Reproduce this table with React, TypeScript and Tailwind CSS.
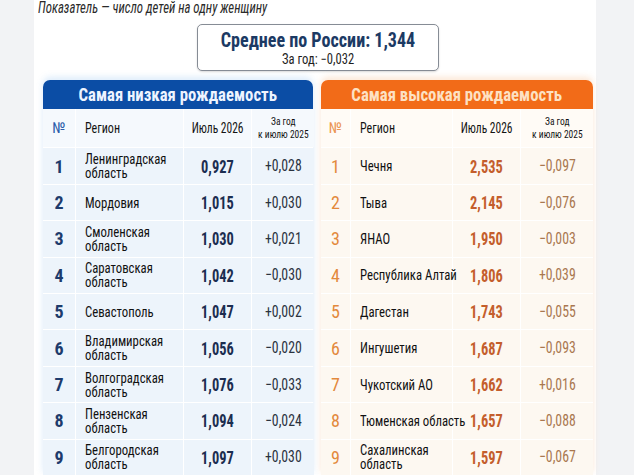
import React from 'react'

type Row = [number, string, string, string]

const lowest: Row[] = [
  [1, 'Ленинградская\nобласть', '0,927', '+0,028'],
  [2, 'Мордовия', '1,015', '+0,030'],
  [3, 'Смоленская\nобласть', '1,030', '+0,021'],
  [4, 'Саратовская\nобласть', '1,042', '−0,030'],
  [5, 'Севастополь', '1,047', '+0,002'],
  [6, 'Владимирская\nобласть', '1,056', '−0,020'],
  [7, 'Волгоградская\nобласть', '1,076', '−0,033'],
  [8, 'Пензенская\nобласть', '1,094', '−0,024'],
  [9, 'Белгородская\nобласть', '1,097', '+0,030'],
]

const highest: Row[] = [
  [1, 'Чечня', '2,535', '−0,097'],
  [2, 'Тыва', '2,145', '−0,076'],
  [3, 'ЯНАО', '1,950', '−0,003'],
  [4, 'Республика Алтай', '1,806', '+0,039'],
  [5, 'Дагестан', '1,743', '−0,055'],
  [6, 'Ингушетия', '1,687', '−0,093'],
  [7, 'Чукотский АО', '1,662', '+0,016'],
  [8, 'Тюменская область', '1,657', '−0,088'],
  [9, 'Сахалинская\nобласть', '1,597', '−0,067'],
]

// the source font is narrower than anything installed, so glyphs get squeezed per element
const squeeze = 'inline-block whitespace-pre'

function HeadRow({ cols, bg, numColor }: { cols: string; bg: string; numColor: string }) {
  return (
    <div className={`${cols} h-[38px]`}>
      <div className={`${bg} flex items-center justify-center text-[15px] ${numColor}`}>№</div>
      <div className={`${bg} flex items-center pl-[9px] text-[14px] text-[#141414]`}>
        <span className={`${squeeze} scale-x-[0.86] origin-left`}>Регион</span>
      </div>
      <div className={`${bg} flex items-center justify-center text-[14px] text-[#141414]`}>
        <span className={`${squeeze} scale-x-[0.82]`}>Июль 2026</span>
      </div>
      <div className={`${bg} flex flex-col items-center justify-center text-[11px] leading-[13px] text-[#141414]`}>
        <span className={`${squeeze} scale-x-[0.86]`}>За год</span>
        <span className={`${squeeze} scale-x-[0.86]`}>к июлю 2025</span>
      </div>
    </div>
  )
}

function LowTable() {
  const cols = 'grid grid-cols-[32px_107px_67px_62px] gap-x-[1px]'
  return (
    <div className="w-[270px] shadow-[0_-3px_6px_rgba(120,180,240,0.25)] rounded-t-[7px]">
      <div className="h-[29px] rounded-t-[7px] bg-[#0b4da5] flex items-center justify-center text-[19px] font-bold text-[#eef4ff] leading-none">
        <span className={`${squeeze} scale-x-[0.88]`}>Самая низкая рождаемость</span>
      </div>
      <div className="bg-white flex flex-col gap-y-[1px]">
        <HeadRow cols={cols} bg="bg-[#f5f9fd]" numColor="text-[#2b5daa]" />
        {lowest.map(([n, region, value, delta]) => (
          <div key={n} className={`${cols} h-[35.4px]`}>
            <div className="bg-[#edf4fb] flex items-center justify-center text-[18px] font-bold text-[#1d3b6c]">{n}</div>
            <div className="bg-[#edf4fb] flex items-center pl-[9px] text-[14px] leading-[14px] text-[#111]">
              <span className={`${squeeze} scale-x-[0.91] origin-left`}>{region}</span>
            </div>
            <div className="bg-[#edf4fb] flex items-center justify-center text-[18px] font-bold text-[#1b2d50]">
              <span className={`${squeeze} scale-x-[0.8]`}>{value}</span>
            </div>
            <div className="bg-[#edf4fb] flex items-center justify-center text-[16px] text-[#2a323e]">
              <span className={`${squeeze} scale-x-[0.86]`}>{delta}</span>
            </div>
          </div>
        ))}
      </div>
    </div>
  )
}

function HighTable() {
  const cols = 'grid grid-cols-[29px_101px_67px_72px] gap-x-[1px]'
  return (
    <div className="w-[272px] shadow-[0_-3px_6px_rgba(245,160,90,0.25)] rounded-t-[7px]">
      <div className="h-[29px] rounded-t-[7px] bg-[#f26b18] flex items-center justify-center text-[19px] font-bold text-[#fde1c3] leading-none">
        <span className={`${squeeze} scale-x-[0.88]`}>Самая высокая рождаемость</span>
      </div>
      <div className="bg-white flex flex-col gap-y-[1px]">
        <HeadRow cols={cols} bg="bg-[#fffbf6]" numColor="text-[#eb9552]" />
        {highest.map(([n, region, value, delta]) => (
          <div key={n} className={`${cols} h-[35.4px]`}>
            <div className="bg-[#fdf8f1] flex items-center justify-center text-[18px] text-[#e3893c]">{n}</div>
            <div className="bg-[#fdf8f1] flex items-center pl-[9px] text-[14px] leading-[14px] text-[#111]">
              <span className={`${squeeze} scale-x-[0.91] origin-left`}>{region}</span>
            </div>
            <div className="bg-[#fdf8f1] flex items-center justify-center text-[18px] font-bold text-[#c45e2c]">
              <span className={`${squeeze} scale-x-[0.8]`}>{value}</span>
            </div>
            <div className="bg-[#fdf8f1] flex items-center justify-center text-[16px] text-[#a9774f]">
              <span className={`${squeeze} scale-x-[0.86]`}>{delta}</span>
            </div>
          </div>
        ))}
      </div>
    </div>
  )
}

export default function App() {
  return (
    <div className="w-[634px] h-[475px] overflow-hidden bg-[#f2f3f5] font-['Liberation_Sans_Narrow','Roboto_Condensed','DejaVu_Sans_Condensed',sans-serif]">
      <div className="ml-[34px] w-[562px] h-full bg-white flex flex-col">
        <div className="h-[27px] pl-[4px] -mt-[1px] text-[16px] italic leading-[18px] text-[#2a2a2a]">
          <span className={`${squeeze} scale-x-[0.8] origin-left`}>Показатель — число детей на одну женщину</span>
        </div>
        <div className="flex justify-center">
          <div className="w-[242px] h-[47px] ml-[6px] border-[1.5px] border-[#868c95] rounded-[5px] bg-white shadow-[0_1px_2px_rgba(0,0,0,0.15)] flex flex-col items-center justify-center">
            <div className="text-[21px] font-bold leading-[22px] text-[#1c3a64]">
              <span className={`${squeeze} scale-x-[0.86]`}>Среднее по России: 1,344</span>
            </div>
            <div className="text-[14px] leading-[16px] text-[#1e1e1e]">
              <span className={`${squeeze} scale-x-[0.9]`}>За год: −0,032</span>
            </div>
          </div>
        </div>
        <div className="mt-[9px] pl-[9px] flex gap-[8px]">
          <LowTable />
          <HighTable />
        </div>
      </div>
    </div>
  )
}
